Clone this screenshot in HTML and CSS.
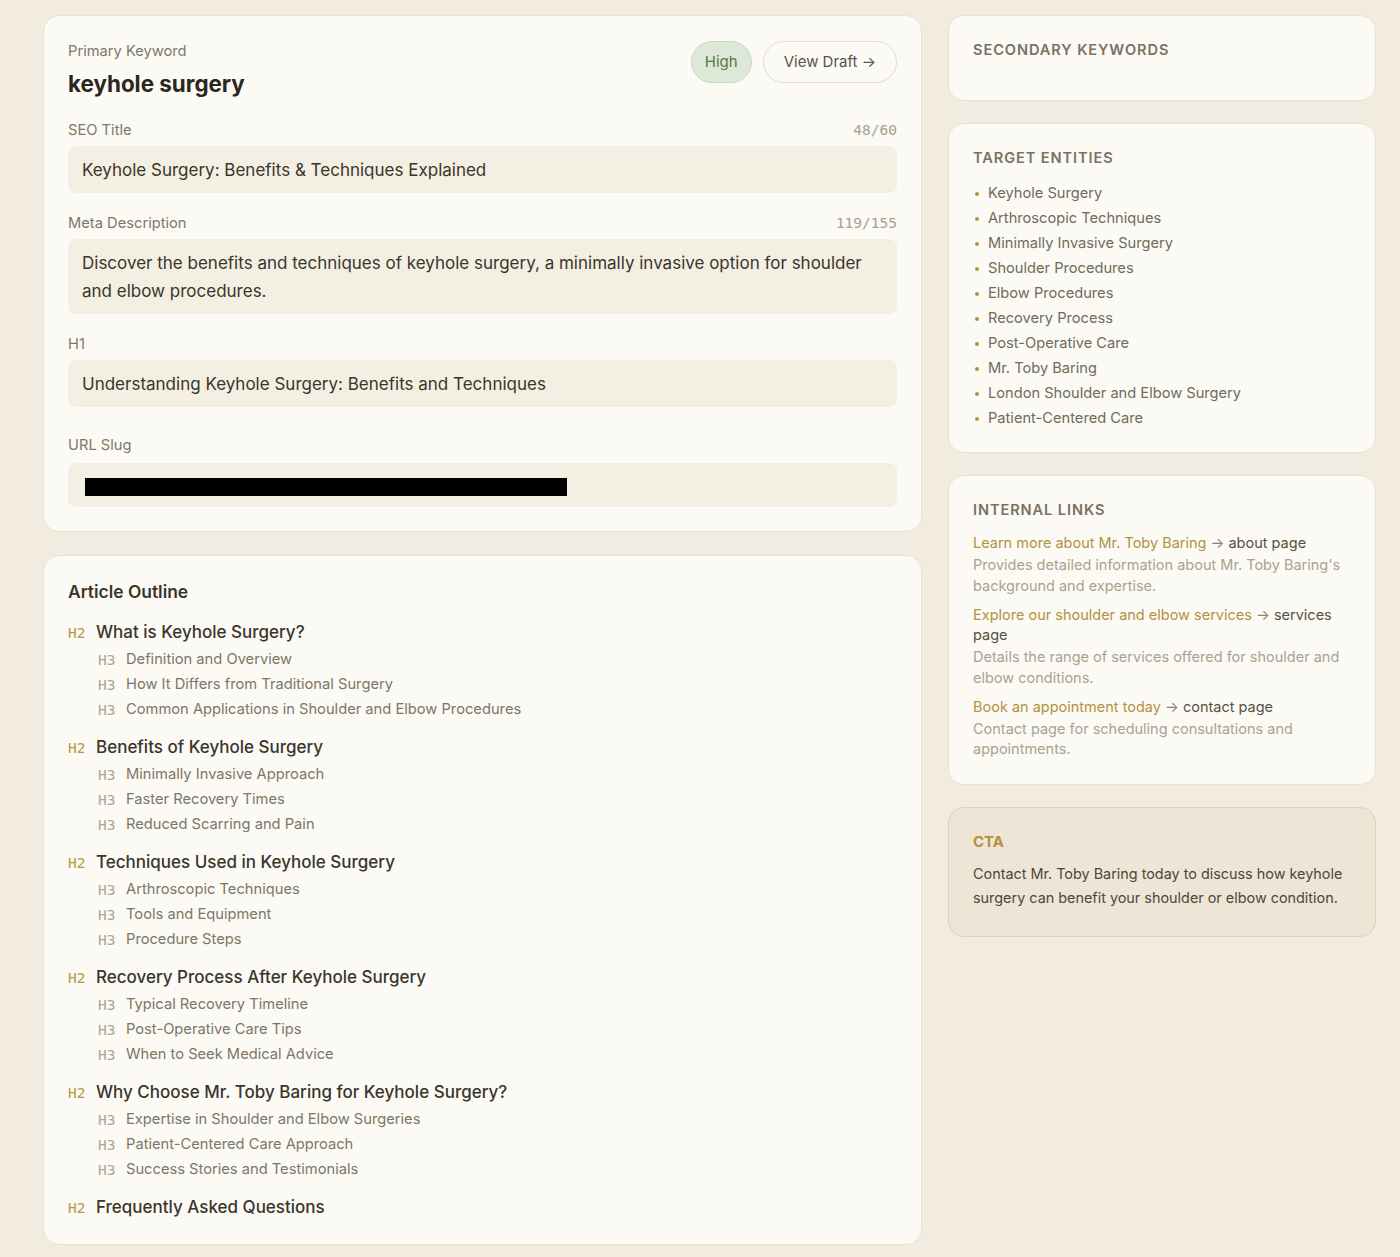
FILE: index.html
```html
<!DOCTYPE html>
<html lang="en">
<head>
    <meta charset="UTF-8">
    <meta name="viewport" content="width=device-width, initial-scale=1">
    <title>Content Brief - keyhole surgery</title>
    <link rel="stylesheet" href="styles.css">
</head>
<body>
    <div class="layout">
        <main class="main-col">
            <section class="card brief">
                <div class="brief-head">
                    <div>
                        <div class="field-label">Primary Keyword</div>
                        <h1 class="keyword">keyhole surgery</h1>
                    </div>
                    <div class="head-actions">
                        <span class="pill pill-high">High</span>
                        <a class="pill pill-btn" href="#">View Draft →</a>
                    </div>
                </div>

                <div class="field">
                    <div class="field-row">
                        <span class="field-label">SEO Title</span>
                        <span class="counter">48/60</span>
                    </div>
                    <div class="field-box">Keyhole Surgery: Benefits &amp; Techniques Explained</div>
                </div>

                <div class="field">
                    <div class="field-row">
                        <span class="field-label">Meta Description</span>
                        <span class="counter">119/155</span>
                    </div>
                    <div class="field-box">Discover the benefits and techniques of keyhole surgery, a minimally invasive option for shoulder and elbow procedures.</div>
                </div>

                <div class="field">
                    <div class="field-row">
                        <span class="field-label">H1</span>
                    </div>
                    <div class="field-box">Understanding Keyhole Surgery: Benefits and Techniques</div>
                </div>

                <div class="field field-slug">
                    <div class="field-row">
                        <span class="field-label">URL Slug</span>
                    </div>
                    <div class="field-box slug-box"><span class="redacted"></span></div>
                </div>
            </section>

            <section class="card outline">
                <h2 class="outline-title">Article Outline</h2>
                <div id="outline"></div>
            </section>
        </main>

        <aside class="side-col">
            <section class="card side-card">
                <h3 class="side-title">Secondary Keywords</h3>
                <div class="empty-list"></div>
            </section>

            <section class="card side-card entities-card">
                <h3 class="side-title">Target Entities</h3>
                <ul class="entities">
                    <li>Keyhole Surgery</li>
                    <li>Arthroscopic Techniques</li>
                    <li>Minimally Invasive Surgery</li>
                    <li>Shoulder Procedures</li>
                    <li>Elbow Procedures</li>
                    <li>Recovery Process</li>
                    <li>Post-Operative Care</li>
                    <li>Mr. Toby Baring</li>
                    <li>London Shoulder and Elbow Surgery</li>
                    <li>Patient-Centered Care</li>
                </ul>
            </section>

            <section class="card side-card">
                <h3 class="side-title">Internal Links</h3>
                <div class="links">
                    <div class="link-item">
                        <div class="link-line"><span class="anchor">Learn more about Mr. Toby Baring</span> <span class="arrow">→</span> <span>about</span> <span>page</span></div>
                        <div class="link-desc">Provides detailed information about Mr. Toby Baring's background and expertise.</div>
                    </div>
                    <div class="link-item">
                        <div class="link-line"><span class="anchor">Explore our shoulder and elbow services</span> <span class="arrow">→</span> <span>services</span> <span>page</span></div>
                        <div class="link-desc">Details the range of services offered for shoulder and elbow conditions.</div>
                    </div>
                    <div class="link-item">
                        <div class="link-line"><span class="anchor">Book an appointment today</span> <span class="arrow">→</span> <span>contact</span> <span>page</span></div>
                        <div class="link-desc">Contact page for scheduling consultations and appointments.</div>
                    </div>
                </div>
            </section>

            <section class="card cta-card">
                <h3 class="cta-title">CTA</h3>
                <p class="cta-text">Contact Mr. Toby Baring today to discuss how keyhole surgery can benefit your shoulder or elbow condition.</p>
            </section>
        </aside>
    </div>

    <script>
        // outline data
        const outline = [
            { h2: 'What is Keyhole Surgery?', h3: ['Definition and Overview', 'How It Differs from Traditional Surgery', 'Common Applications in Shoulder and Elbow Procedures'] },
            { h2: 'Benefits of Keyhole Surgery', h3: ['Minimally Invasive Approach', 'Faster Recovery Times', 'Reduced Scarring and Pain'] },
            { h2: 'Techniques Used in Keyhole Surgery', h3: ['Arthroscopic Techniques', 'Tools and Equipment', 'Procedure Steps'] },
            { h2: 'Recovery Process After Keyhole Surgery', h3: ['Typical Recovery Timeline', 'Post-Operative Care Tips', 'When to Seek Medical Advice'] },
            { h2: 'Why Choose Mr. Toby Baring for Keyhole Surgery?', h3: ['Expertise in Shoulder and Elbow Surgeries', 'Patient-Centered Care Approach', 'Success Stories and Testimonials'] },
            { h2: 'Frequently Asked Questions', h3: [] }
        ];

        const outlineEl = document.getElementById('outline');
        outline.forEach(section => {
            const div = document.createElement('div');
            div.className = 'outline-section';
            let html = `<div class="h2-row"><span class="tag tag-h2">H2</span><span>${section.h2}</span></div>`;
            section.h3.forEach(t => {
                html += `<div class="h3-row"><span class="tag tag-h3">H3</span><span>${t}</span></div>`;
            });
            div.innerHTML = html;
            outlineEl.appendChild(div);
        });
    </script>
</body>
</html>
```

FILE: styles.css
```css
:root {
    --bg: #f2ebdf;
    --card: #fcfaf5;
    --border: #e9e2d3;
    --field: #f4efe3;
    --text: #2b2720;
    --muted: #7f7867;
    --soft: #a7a08d;
    --gold: #b4913f;
    --mono: 'DejaVu Sans Mono', 'Liberation Mono', monospace;
}
* {
    box-sizing: border-box;
}
body {
    margin: 0;
    background: var(--bg);
    color: var(--text);
    font-family: 'Inter', 'Noto Sans', Arial, sans-serif;
}
.layout {
    display: grid;
    grid-template-columns: 879px 428px;
    gap: 26px;
    padding: 15px 24px 15px 43px;
    align-items: start;
}
.main-col, .side-col {
    display: flex;
    flex-direction: column;
}
.main-col {
    gap: 23px;
}
.side-col {
    gap: 22px;
}
.card {
    background: var(--card);
    border: 1px solid var(--border);
    border-radius: 16px;
    padding: 24px;
}

/* brief card */
.brief-head {
    display: flex;
    justify-content: space-between;
    align-items: flex-start;
    margin-bottom: 23px;
}
.brief-head .field-label {
    padding-top: 2px;
}
.field-label {
    font-size: 14.7px;
    line-height: 18px;
    color: var(--muted);
}
.keyword {
    margin: 10px 0 0;
    font-size: 22.4px;
    line-height: 28px;
    font-weight: 700;
    color: var(--text);
}
.head-actions {
    display: flex;
    gap: 11px;
    padding-top: 1px;
}
.pill {
    display: inline-block;
    border-radius: 999px;
    font-size: 15px;
    line-height: 20px;
    padding: 10px 13px;
    border: 1px solid;
    text-decoration: none;
}
.pill-high {
    background: #dde9d6;
    border-color: #c6d9bd;
    color: #56784b;
}
.pill-btn {
    background: var(--card);
    border-color: #e6dccb;
    color: #5a5446;
    padding: 10px 20px;
}
.field {
    margin-bottom: 21px;
}
.field-row {
    display: flex;
    justify-content: space-between;
    align-items: baseline;
    margin-bottom: 7px;
}
.counter {
    font-family: var(--mono);
    font-size: 14.5px;
    line-height: 18px;
    color: var(--soft);
}
.field-box {
    background: var(--field);
    border-radius: 8px;
    padding: 10px 14px 9px;
    font-size: 17px;
    line-height: 28px;
    color: #3a352b;
}
.field-slug {
    margin-top: 29px;
    margin-bottom: 0;
}
.field-slug .field-row {
    margin-bottom: 9px;
}
.slug-box {
    height: 44px;
    padding: 15px 17px 0;
}
.redacted {
    display: block;
    width: 482px;
    height: 18px;
    background: #000;
}

/* outline */
.outline-title {
    margin: 0 0 15px;
    font-size: 17.4px;
    line-height: 24px;
    font-weight: 600;
    color: #3a352b;
}
.outline-section {
    margin-bottom: 12.5px;
}
.outline-section:last-child {
    margin-bottom: 0;
}
.h2-row, .h3-row {
    display: flex;
    align-items: center;
}
.h2-row {
    font-size: 17px;
    line-height: 26px;
    height: 26px;
    color: #3a352b;
    font-weight: 500;
}
.h3-row {
    padding-left: 30px;
    font-size: 14.7px;
    line-height: 25px;
    height: 25px;
    color: #7c7665;
}
.h2-row + .h3-row {
    margin-top: 1.5px;
}
.tag {
    font-family: var(--mono);
    font-size: 14.5px;
    width: 28px;
    flex: none;
    font-weight: 400;
    padding-top: 2px;
}
.tag-h2 {
    color: #b8983f;
}
.tag-h3 {
    color: #aba591;
}

/* side cards */
.side-title {
    margin: 0;
    font-size: 14.6px;
    line-height: 20px;
    font-weight: 600;
    text-transform: uppercase;
    letter-spacing: 0.9px;
    color: #7a7261;
}
.empty-list {
    height: 16px;
}
.entities-card {
    padding-bottom: 21px;
}
.entities {
    list-style: none;
    margin: 13px 0 0;
    padding: 0;
}
.entities li {
    position: relative;
    padding-left: 15px;
    font-size: 14.65px;
    line-height: 25px;
    color: #716b5a;
}
.entities li::before {
    content: '';
    position: absolute;
    left: 2px;
    top: 11px;
    width: 4px;
    height: 4px;
    border-radius: 50%;
    background: var(--gold);
}
.links {
    margin-top: 13px;
    display: flex;
    flex-direction: column;
    gap: 8.5px;
}
.link-line {
    font-size: 14.5px;
    line-height: 20.5px;
    color: #575142;
}
.anchor {
    color: var(--gold);
}
.arrow {
    color: #8c8575;
}
.link-desc {
    margin-top: 1.5px;
    font-size: 14.5px;
    line-height: 20.5px;
    color: #aaa28f;
}
.cta-card {
    background: #ede5d6;
    border-color: #ddd1b8;
    padding-bottom: 26px;
}
.cta-title {
    margin: 0 0 10px;
    font-size: 15px;
    line-height: 20px;
    font-weight: 700;
    color: var(--gold);
}
.cta-text {
    margin: 0;
    font-size: 14.4px;
    line-height: 24px;
    color: #4d473a;
}
```
